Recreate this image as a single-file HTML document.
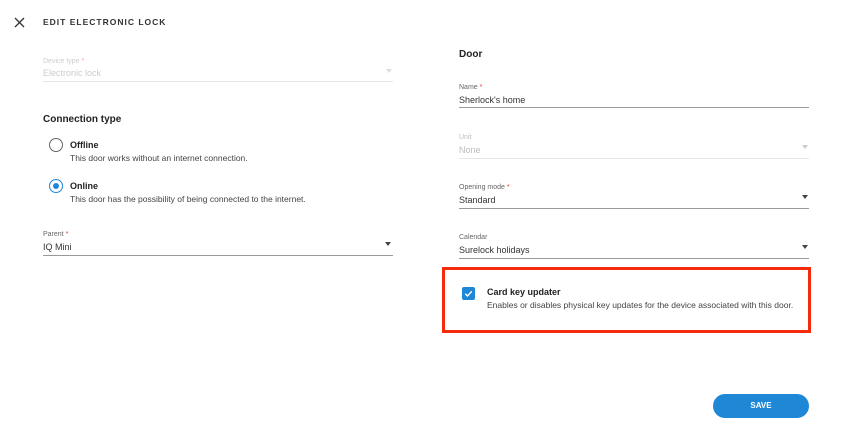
<!DOCTYPE html>
<html><head><style>
*{margin:0;padding:0;box-sizing:border-box}
body{width:850px;height:433px;background:#fff;font-family:"Liberation Sans",sans-serif;position:relative;overflow:hidden;color:#222}
.a{position:absolute;white-space:nowrap}
.lbl{font-size:7px;color:#666}
.lbl b{color:#e53935;font-weight:normal}
.val{font-size:9px;color:#333}
.line{position:absolute;height:1px;background:#999}
.arr{position:absolute;width:0;height:0;border-left:3.5px solid transparent;border-right:3.5px solid transparent;border-top:4px solid #444}
.t{font-size:9px;font-weight:bold;color:#222}
.d{font-size:8.5px;color:#444}
</style></head><body>
<svg class="a" style="left:14px;top:17px" width="11" height="11"><path d="M1 1L10 10M10 1L1 10" stroke="#333" stroke-width="1.3"/></svg>
<div class="a" style="left:43px;top:17px;font-size:8.5px;letter-spacing:1px;font-weight:bold;color:#333">EDIT ELECTRONIC LOCK</div>

<div class="a lbl" style="left:43px;top:58px;color:#ccc">Device type <b style="color:#f4a6a6">*</b></div>
<div class="a val" style="left:43px;top:68px;color:#ccc">Electronic lock</div>
<div class="line" style="left:43px;top:81px;width:350px;background:#e6e6e6"></div>
<div class="arr" style="left:386px;top:69px;border-top-color:#ddd"></div>

<div class="a" style="left:43px;top:114px;font-size:10px;font-weight:bold;color:#222">Connection type</div>
<div class="a" style="left:49px;top:138px;width:14px;height:14px;border:1.5px solid #666;border-radius:50%"></div>
<div class="a t" style="left:70px;top:140px">Offline</div>
<div class="a d" style="left:70px;top:153px">This door works without an internet connection.</div>
<div class="a" style="left:49px;top:179px;width:14px;height:14px;border:1.5px solid #1e88d6;border-radius:50%"><div style="position:absolute;left:2.5px;top:2.5px;width:6px;height:6px;border-radius:50%;background:#1e88d6"></div></div>
<div class="a t" style="left:70px;top:181px">Online</div>
<div class="a d" style="left:70px;top:194px">This door has the possibility of being connected to the internet.</div>

<div class="a lbl" style="left:43px;top:231px">Parent <b>*</b></div>
<div class="a val" style="left:43px;top:242px">IQ Mini</div>
<div class="line" style="left:43px;top:255px;width:350px"></div>
<div class="arr" style="left:385px;top:242px"></div>

<div class="a" style="left:459px;top:49px;font-size:10px;font-weight:bold;color:#222">Door</div>
<div class="a lbl" style="left:459px;top:84px">Name <b>*</b></div>
<div class="a val" style="left:459px;top:95px">Sherlock's home</div>
<div class="line" style="left:459px;top:107px;width:350px"></div>

<div class="a lbl" style="left:459px;top:134px;color:#bbb">Unit</div>
<div class="a val" style="left:459px;top:145px;color:#bbb">None</div>
<div class="line" style="left:459px;top:158px;width:350px;background:#e6e6e6"></div>
<div class="arr" style="left:802px;top:145px;border-top-color:#ccc"></div>

<div class="a lbl" style="left:459px;top:184px">Opening mode <b>*</b></div>
<div class="a val" style="left:459px;top:195px">Standard</div>
<div class="line" style="left:459px;top:208px;width:350px"></div>
<div class="arr" style="left:802px;top:195px"></div>

<div class="a lbl" style="left:459px;top:234px">Calendar</div>
<div class="a val" style="left:459px;top:245px">Surelock holidays</div>
<div class="line" style="left:459px;top:258px;width:350px"></div>
<div class="arr" style="left:802px;top:245px"></div>

<div class="a" style="left:442px;top:267px;width:369px;height:66px;border:3px solid #f52a0c"></div>
<div class="a" style="left:462px;top:287px;width:13px;height:13px;background:#1e88d6;border-radius:2px"><svg width="13" height="13"><path d="M3.3 6.8L5.5 9L9.8 4.3" stroke="#fff" stroke-width="1.4" fill="none"/></svg></div>
<div class="a t" style="left:487px;top:287px">Card key updater</div>
<div class="a d" style="left:487px;top:300px">Enables or disables physical key updates for the device associated with this door.</div>

<div class="a" style="left:713px;top:394px;width:96px;height:24px;border-radius:12px;background:#1e88d6;color:#fff;font-size:8px;font-weight:bold;text-align:center;line-height:24px">SAVE</div>
</body></html>
